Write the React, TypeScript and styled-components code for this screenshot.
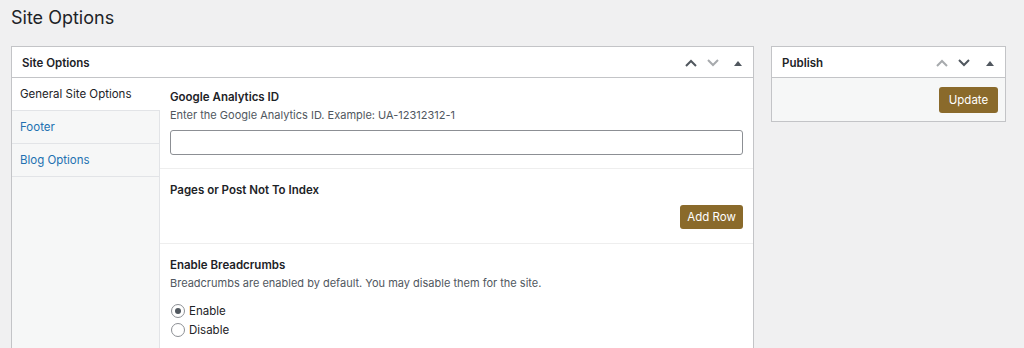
import React from "react";
import styled, { createGlobalStyle } from "styled-components";

const Global = createGlobalStyle`
  html, body { margin: 0; padding: 0; }
  body {
    background: #f0f0f1;
    font-family: Inter, "Noto Sans", "Liberation Sans", sans-serif;
    color: #1d2327;
    font-size: 11px;
  }
`;

const Page = styled.div`
  padding: 6px 19px 0 11px;
  height: 348px;
  box-sizing: border-box;
  overflow: hidden;
`;

const Title = styled.h1`
  margin: 0 0 16px 0;
  font-size: 18px;
  font-weight: 400;
  line-height: 24px;
  color: #1d2327;
`;

const Columns = styled.div`
  display: flex;
  gap: 17px;
  align-items: flex-start;
`;

const Box = styled.div<{ $w: number }>`
  width: ${(p) => p.$w}px;
  flex: none;
  box-sizing: border-box;
  background: #fff;
  border: 1px solid #c3c4c7;
`;

const BoxHeader = styled.div`
  height: 30px;
  border-bottom: 1px solid #c3c4c7;
  display: flex;
  align-items: center;
  padding: 0 4px 0 10px;
`;

const BoxTitle = styled.h2`
  flex: 1;
  margin: 0;
  font-size: 11.5px;
  font-weight: 600;
  padding-top: 2px;
`;

const Handles = styled.div`
  display: flex;
  align-items: center;
  padding-top: 1px;
`;

const Handle = styled.span<{ $muted?: boolean; $gap?: number }>`
  width: 22px;
  height: 22px;
  margin-left: ${(p) => p.$gap ?? 0}px;
  display: flex;
  align-items: center;
  justify-content: center;
  color: ${(p) => (p.$muted ? "#a7aaad" : "#50575e")};
`;

const Body = styled.div`
  display: grid;
  grid-template-columns: 148px 1fr;
  height: 272px;
`;

const Tabs = styled.div`
  background: #f6f7f7;
  border-right: 1px solid #e2e4e7;
  display: flex;
  flex-direction: column;
`;

const Tab = styled.div<{ $active?: boolean }>`
  box-sizing: border-box;
  height: 33px;
  display: flex;
  align-items: center;
  padding: 0 8px;
  border-bottom: 1px solid #e2e4e7;
  font-size: 11.5px;
  color: ${(p) => (p.$active ? "#1d2327" : "#2271b1")};
  background: ${(p) => (p.$active ? "#fff" : "transparent")};
  margin-right: ${(p) => (p.$active ? "-1px" : "0")};
`;

const Fields = styled.div`
  display: flex;
  flex-direction: column;
`;

const Field = styled.div`
  padding: 14px 10px 14px 10px;
  border-bottom: 1px solid #eeeeee;
  &:first-child { padding-top: 12px; padding-bottom: 13px; }
  &:last-child { border-bottom: none; }
`;

const Label = styled.div`
  font-size: 11.5px;
  font-weight: 600;
  line-height: 14px;
  color: #1d2327;
`;

const Desc = styled.div`
  font-size: 11px;
  line-height: 14px;
  margin-top: 4px;
  color: #50575e;
`;

const Input = styled.input`
  display: block;
  width: 100%;
  box-sizing: border-box;
  height: 25px;
  margin-top: 8px;
  border: 1px solid #8c8f94;
  border-radius: 3px;
  background: #fff;
`;

const RowEnd = styled.div`
  display: flex;
  justify-content: flex-end;
  margin-top: 8px;
`;

const Button = styled.button<{ $w: number; $h: number }>`
  width: ${(p) => p.$w}px;
  height: ${(p) => p.$h}px;
  border: none;
  border-radius: 3px;
  background: #8a6a2b;
  color: #fff;
  font-family: inherit;
  font-size: 11.5px;
  padding: 0;
`;

const Radios = styled.div`
  margin-top: 14px;
  display: flex;
  flex-direction: column;
  gap: 5px;
`;

const RadioRow = styled.label`
  display: flex;
  align-items: center;
  gap: 4px;
  font-size: 11.5px;
  color: #1d2327;
  line-height: 14px;
`;

const RadioCircle = styled.span<{ $checked?: boolean }>`
  width: 12px;
  height: 12px;
  border-radius: 50%;
  border: 1px solid #8c8f94;
  background: #fff;
  display: flex;
  align-items: center;
  justify-content: center;
  margin-left: 1px;
  &::after {
    content: "";
    width: 6px;
    height: 6px;
    border-radius: 50%;
    background: ${(p) => (p.$checked ? "#50575e" : "transparent")};
  }
`;

const PublishBody = styled.div`
  background: #f6f7f7;
  padding: 9px 7px 8px;
  display: flex;
  justify-content: flex-end;
`;

const ChevronUp = () => (
  <svg width="12" height="8" viewBox="0 0 12 8" fill="none">
    <path d="M1 7 L6 2 L11 7" stroke="currentColor" strokeWidth="2" />
  </svg>
);
const ChevronDown = () => (
  <svg width="12" height="8" viewBox="0 0 12 8" fill="none">
    <path d="M1 1 L6 6 L11 1" stroke="currentColor" strokeWidth="2" />
  </svg>
);
const Caret = () => (
  <svg width="8" height="6" viewBox="0 0 8 6">
    <path d="M0 6 L4 1 L8 6 Z" fill="currentColor" />
  </svg>
);

export default function App() {
  return (
    <Page>
      <Global />
      <Title>Site Options</Title>
      <Columns>
        <Box $w={743}>
          <BoxHeader>
            <BoxTitle>Site Options</BoxTitle>
            <Handles>
              <Handle><ChevronUp /></Handle>
              <Handle $muted><ChevronDown /></Handle>
              <Handle $gap={3}><Caret /></Handle>
            </Handles>
          </BoxHeader>
          <Body>
            <Tabs>
              <Tab $active>General Site Options</Tab>
              <Tab>Footer</Tab>
              <Tab>Blog Options</Tab>
            </Tabs>
            <Fields>
              <Field>
                <Label>Google Analytics ID</Label>
                <Desc>Enter the Google Analytics ID. Example: UA-12312312-1</Desc>
                <Input type="text" />
              </Field>
              <Field>
                <Label>Pages or Post Not To Index</Label>
                <RowEnd>
                  <Button $w={63} $h={24}>Add Row</Button>
                </RowEnd>
              </Field>
              <Field>
                <Label>Enable Breadcrumbs</Label>
                <Desc>Breadcrumbs are enabled by default. You may disable them for the site.</Desc>
                <Radios>
                  <RadioRow><RadioCircle $checked />Enable</RadioRow>
                  <RadioRow><RadioCircle />Disable</RadioRow>
                </Radios>
              </Field>
            </Fields>
          </Body>
        </Box>
        <Box $w={235}>
          <BoxHeader>
            <BoxTitle>Publish</BoxTitle>
            <Handles>
              <Handle $muted><ChevronUp /></Handle>
              <Handle><ChevronDown /></Handle>
              <Handle $gap={4}><Caret /></Handle>
            </Handles>
          </BoxHeader>
          <PublishBody>
            <Button $w={59} $h={26}>Update</Button>
          </PublishBody>
        </Box>
      </Columns>
    </Page>
  );
}
